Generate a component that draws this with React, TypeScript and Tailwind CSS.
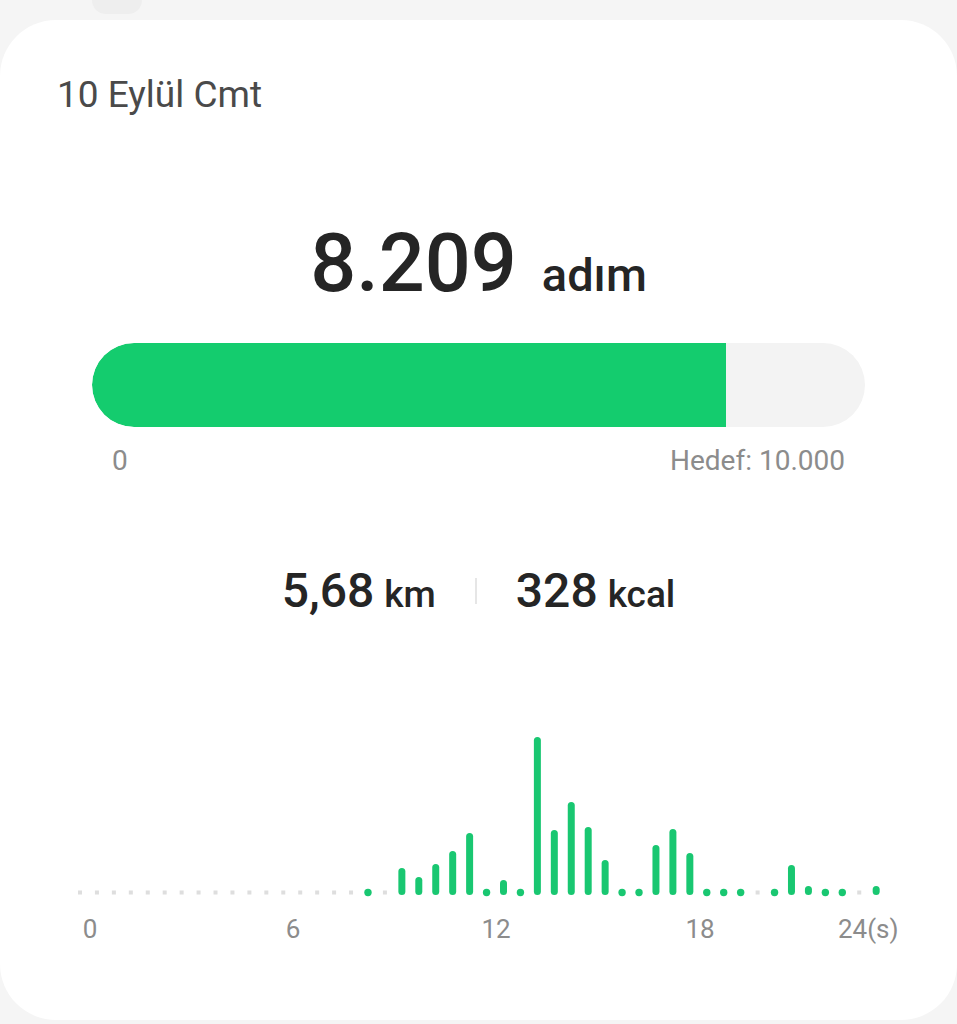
import React from 'react';

const GREEN = '#19c771';

// 48 half-hour slots; value = top y of the bar in chart coords (bottom = 170), 'd' = green dot, 'g' = empty gray dot
const slots: (number | 'd' | 'g')[] = [
  'g', 'g', 'g', 'g', 'g', 'g', 'g', 'g', 'g', 'g', 'g', 'g', 'g', 'g', 'g', 'g', 'g',
  'd', 'g', 143, 152, 139, 126, 108, 'd', 155, 'd', 12, 105, 77, 102, 135, 'd', 'd',
  120, 104, 128, 'd', 'd', 'd', 'g', 'd', 140, 161, 'd', 'd', 'g', 161,
];

function StepChart() {
  return (
    <svg width="957" height="175" viewBox="0 0 957 175" className="block">
      {slots.map((s, k) => {
        const x = 80 + 16.94 * k;
        if (s === 'g') return <rect key={k} x={x - 2} y={165.5} width={4} height={4} fill="#dedede" />;
        if (s === 'd') return <circle key={k} cx={x} cy={167.5} r={3.7} fill={GREEN} />;
        return <line key={k} x1={x} y1={170 - 3.5} x2={x} y2={s + 3.5} stroke={GREEN} strokeWidth={7} strokeLinecap="round" />;
      })}
    </svg>
  );
}

export default function App() {
  return (
    <div className="min-h-screen bg-[#f5f5f5] font-[Roboto,sans-serif] overflow-hidden">
      <div className="ml-[92px] h-[14px] w-[50px] rounded-b-full bg-[#eeeeee]" />
      <div className="mt-[6px] h-[1000px] bg-white rounded-[56px]">
        <div className="pt-[56px] pl-[57px] text-[37px] leading-none text-[#4a4a4a]">10 Eylül Cmt</div>

        <div className="mt-[110px] flex items-baseline justify-center gap-[25px] text-[#252525]">
          <span className="text-[81px] leading-none font-medium">8.209</span>
          <span className="text-[47px] leading-none font-medium">adım</span>
        </div>

        <div className="mt-[39px] px-[92px]">
          <div className="h-[84px] rounded-full bg-[#f3f3f3] overflow-hidden">
            <div className="h-full w-[82%] rounded-l-full bg-[#14cc6e]" />
          </div>
          <div className="mt-[20px] px-[20px] flex justify-between text-[28px] leading-none text-[#8c8c8c]">
            <span>0</span>
            <span>Hedef: 10.000</span>
          </div>
        </div>

        <div className="mt-[92px] flex items-center justify-center text-[#252525]">
          <div className="flex items-baseline gap-[10px]">
            <span className="text-[48px] leading-none font-medium">5,68</span>
            <span className="text-[37px] leading-none font-medium">km</span>
          </div>
          <div className="mx-[39px] h-[26px] w-[2px] bg-[#e6e6e6]" />
          <div className="flex items-baseline gap-[10px]">
            <span className="text-[48px] leading-none font-medium">328</span>
            <span className="text-[37px] leading-none font-medium">kcal</span>
          </div>
        </div>

        <div className="mt-[110px]">
          <StepChart />
        </div>

        <div className="mt-[16px] flex text-[26px] leading-none text-[#8c8c8c]">
          <span className="ml-[70px] w-[40px] text-center">0</span>
          <span className="ml-[163px] w-[40px] text-center">6</span>
          <span className="ml-[163px] w-[40px] text-center">12</span>
          <span className="ml-[164px] w-[40px] text-center">18</span>
          <span className="ml-[118px]">24(s)</span>
        </div>
      </div>
    </div>
  );
}
